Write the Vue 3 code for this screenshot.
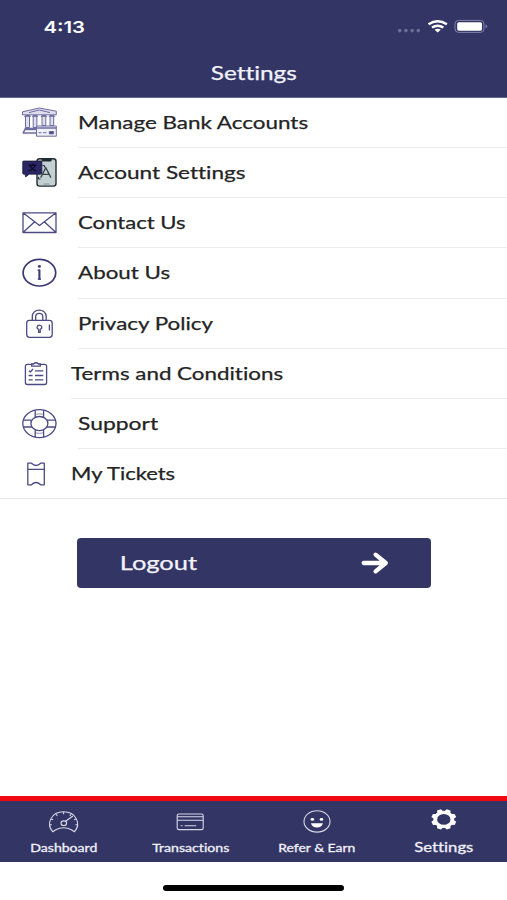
<script setup>
const rows = [
  { id: 'bank', label: 'Manage Bank Accounts', width: 230 },
  { id: 'account', label: 'Account Settings', width: 167.5 },
  { id: 'contact', label: 'Contact Us', width: 107.5 },
  { id: 'about', label: 'About Us', width: 92 },
  { id: 'privacy', label: 'Privacy Policy', width: 135 },
  { id: 'terms', label: 'Terms and Conditions', width: 212, tight: true },
  { id: 'support', label: 'Support', width: 80 },
  { id: 'tickets', label: 'My Tickets', width: 104, tight: true },
]
const tabs = [
  { id: 'dashboard', label: 'Dashboard', width: 67 },
  { id: 'transactions', label: 'Transactions', width: 77 },
  { id: 'refer', label: 'Refer & Earn', width: 77 },
  { id: 'settings', label: 'Settings', width: 59, active: true },
]
const spokes = [0, 45, 90, 135, 180, 225, 270, 315]
</script>

<template>
  <div class="screen">
    <header class="header">
      <div class="status">
        <svg class="clock" width="50" height="20">
          <text x="-0.5" y="15.5" textLength="41.5" lengthAdjust="spacingAndGlyphs">4:13</text>
        </svg>
        <svg class="signals" width="96" height="20" viewBox="394 17 96 20">
          <g fill="#6d6e98">
            <circle cx="399.7" cy="30.6" r="1.8" /><circle cx="405.9" cy="30.6" r="1.8" />
            <circle cx="412.1" cy="30.6" r="1.8" /><circle cx="418.3" cy="30.6" r="1.8" />
          </g>
          <g fill="none" stroke="#fff" stroke-width="2.5">
            <path d="M428.5 24.2Q437.7 18.2 446.9 24.2" />
            <path d="M432 27.5Q437.7 23.8 443.4 27.5" />
          </g>
          <path d="M434.6 29.7Q437.7 27.8 440.8 29.7L437.7 32.5Z" fill="#fff" />
          <rect x="455" y="20.4" width="29" height="12" rx="3.6" fill="none" stroke="#8182a8" />
          <rect x="457.2" y="22.2" width="24.8" height="8.5" rx="1.6" fill="#fff" />
          <path d="M485.6 24.2Q489 26.4 485.6 28.6Z" fill="#8182a8" />
        </svg>
      </div>
      <h1 class="title">
        <svg width="86" height="28">
          <text x="-0.2" y="20.3" textLength="86" lengthAdjust="spacingAndGlyphs">Settings</text>
        </svg>
      </h1>
    </header>

    <ul class="list">
      <li v-for="(row, index) in rows" :key="row.id" class="row" :class="{ tight: row.tight }">
        <svg class="icon" width="60" height="50" viewBox="0 0 60 50">
          <g v-if="row.id === 'bank'" stroke="#6c6ca0" stroke-width="1" fill="#dedeee">
            <path d="M22.5 13.8L39.3 10L56.3 13.2V16.8H22.5Z" />
            <path d="M29 14.6L39.3 12L50 14.6" fill="none" />
            <path d="M25.5 17.5h4v12h-4ZM33.2 17.5h3.7v12h-3.7ZM42 17.5h3.8v10H42ZM50 17.5h3.7v10H50Z" />
            <path d="M24.5 30.5h12M23 34.8L25 31.5h11.5M22.7 35h14" fill="none" stroke-width="1.5" />
            <path d="M24.2 18.3h6.6M32 18.3h6M40.8 18.3h6.3M48.8 18.3h6.4" />
            <path d="M36.5 28h19.8v10.2H36.5Z" fill="#f1f1fa" />
            <path d="M36.5 30h19.8" stroke-width="1.5" />
            <path d="M38.5 34.7h3M43 34.7h3.5" />
            <path d="M49.3 33.5h4.2v2.4h-4.2Z" fill="#454580" />
          </g>
          <g v-else-if="row.id === 'account'">
            <rect x="37" y="10.8" width="19" height="27.3" rx="2.6" fill="#c3d1d3" stroke="#202c32" stroke-width="1.4" />
            <path d="M41.5 11h10.2v1.6q0 .8-1 .8h-8.2q-1 0-1-.8Z" fill="#202c32" />
            <path d="M22.7 14q0-1 1-1h17q1.2 0 1.2 1v11q0 1.2-1.2 1.2H29.2L25.7 29L25 26.2h-1.3q-1 0-1-1.2Z" fill="#2b2764" stroke="#15152f" stroke-width=".7" />
            <path d="M28.5 17.2h8M32.5 15.5v1.7M35 17.2Q33.7 21 28.5 23M30 17.5Q31.5 21 36.3 23" fill="none" stroke="#080922" stroke-width="1.2" />
            <path d="M40.7 29.6L45.8 19.6L50.9 29.6M42.4 26.3h6.8" fill="none" stroke="#35444b" stroke-width="1.3" />
            <path d="M42.5 17.5h2v2M38.5 29v2h2" fill="none" stroke="#202c32" />
            <path d="M43.5 36h6" stroke="#829397" />
          </g>
          <g v-else-if="row.id === 'contact'" class="line">
            <path d="M23 14.8H56V34.5H23ZM23 14.8L39.5 27.5L56 14.8M23 34.5L34.7 23.8M56 34.5L44.3 23.8" />
          </g>
          <g v-else-if="row.id === 'about'">
            <ellipse cx="39.4" cy="24.7" rx="16.3" ry="13.3" fill="none" stroke="#3b3975" stroke-width="1.7" />
            <path d="M37.6 22.2h1.9v8.9M37.8 31.1h3.2" fill="none" stroke="#3b3975" stroke-width="1.2" />
            <path d="M39.4 21.7v9.9" stroke="#3b3975" stroke-width="2" />
            <ellipse cx="39.4" cy="18.4" rx="1.5" ry="1.3" fill="#3b3975" />
          </g>
          <g v-else-if="row.id === 'privacy'" class="line">
            <rect x="26.7" y="21.4" width="25.5" height="17" rx="2.8" />
            <path d="M32.3 21.2V17.5C32.3 9 46.2 9 46.2 17.5V21.2M35.7 21.2V17.5C35.7 13.3 42.8 13.3 42.8 17.5V21.2" />
            <path d="M38.6 30.3Q36.9 29.6 37 28.2Q37.5 26.2 39.4 26.2Q41.4 26.2 41.8 28.2Q41.9 29.6 40.2 30.3V33.4H38.6Z" />
            <path d="M49.4 25.5v6" />
          </g>
          <g v-else-if="row.id === 'terms'" class="line">
            <rect x="25.4" y="15.3" width="21.2" height="20.2" rx="2" />
            <path d="M31.6 17.1V15h2Q36 12.5 38.4 15h2v2.1Z" fill="#fff" />
            <path d="M29 21.7l1.3 1.3L33 20M35 21.8h8.3M28.6 26.5h4M35 26.5h8.3M28.6 30.9h4M35 30.9h8.3" />
          </g>
          <g v-else-if="row.id === 'support'" class="line">
            <ellipse cx="39.4" cy="24.6" rx="16.6" ry="14" />
            <ellipse cx="39.4" cy="24.6" rx="8.5" ry="7.1" />
            <path d="M35.2 18.4V11.3M43.6 18.4V11.3M35.2 30.8V37.9M43.6 30.8V37.9M31.8 21.2H23.5M31.8 28H23.5M47 21.2H55.3M47 28H55.3" />
            <path d="M35.4 15.3Q39.4 14.3 43.4 15.3M35.4 33.9Q39.4 34.9 43.4 33.9" stroke-width=".6" />
          </g>
          <g v-else class="line">
            <path d="M27.8 14.2H31.5Q36 18.8 40.7 14.2H44.3V35.8H40.7Q36 31.2 31.5 35.8H27.8ZM27.8 20.4H44.3" />
          </g>
        </svg>
        <div class="cell">
          <svg :width="row.width + 2" height="34">
            <text x="0.1" :y="index < 4 ? 23.2 : 23.75" :textLength="row.width" lengthAdjust="spacingAndGlyphs">{{ row.label }}</text>
          </svg>
        </div>
      </li>
    </ul>

    <main class="content">
      <button class="logout">
        <svg width="78" height="30">
          <text x="-0.3" y="22" textLength="77.5" lengthAdjust="spacingAndGlyphs">Logout</text>
        </svg>
        <svg width="28" height="24" viewBox="0 0 28 24">
          <path d="M2.7 12H24.5M14.6 3.7L24.8 12L14.6 20.3" fill="none" stroke="#fff" stroke-width="4.3" stroke-linecap="round" stroke-linejoin="round" />
        </svg>
      </button>
    </main>

    <nav class="tabs">
      <div v-for="tab in tabs" :key="tab.id" class="tab" :class="{ active: tab.active }">
        <svg width="36" height="34" viewBox="0 0 36 34">
          <g v-if="tab.id === 'dashboard'" class="tabline" transform="translate(.6 0)">
            <path d="M7.2 30.8C0 23 5.5 10.8 18 10.8C30.5 10.8 36 23 28.8 30.8L26.2 29Q18 24.5 9.8 29Z" />
            <ellipse cx="18.2" cy="22.2" rx="2.8" ry="2.3" />
            <path d="M20 20.3L27.3 15M18 11v2.2M10.5 13.2l1.3 1.8M5.5 18l2 .8M3.9 23.7h2.3M25.5 13.2l-1.3 1.8M30.5 18l-2 .8M32.1 23.7h-2.3" />
          </g>
          <g v-else-if="tab.id === 'transactions'" class="tabline">
            <rect x="5.2" y="13" width="26" height="15.6" rx="1.7" />
            <path d="M5.2 15.8H31.2M5.2 19.3H31.2M8.7 24.7h1.8M12.7 24.7H24.2" />
          </g>
          <g v-else-if="tab.id === 'refer'">
            <ellipse cx="18" cy="20.4" rx="13" ry="10.7" class="tabline" />
            <ellipse cx="13.4" cy="18.4" rx="1.8" ry="1.4" fill="#fff" />
            <ellipse cx="22.5" cy="18.4" rx="1.8" ry="1.4" fill="#fff" />
            <path d="M11.9 22.3H24Q22.8 26.5 18 26.5T11.9 22.3Z" fill="#fff" />
          </g>
          <g v-else transform="translate(17.8 18.4) scale(1.22 1)">
            <circle r="7" fill="none" stroke="#fff" stroke-width="3.1" />
            <path v-for="angle in spokes" :key="angle" d="M-2.7 -7.5L-1.7 -10.3H1.7L2.7 -7.5Z" fill="#fff" :transform="`rotate(${angle + 22.5})`" />
          </g>
        </svg>
        <svg :width="tab.width" height="20">
          <text x="0.3" :y="tab.active ? 16.5 : 16.7" :textLength="tab.width" lengthAdjust="spacingAndGlyphs">{{ tab.label }}</text>
        </svg>
      </div>
    </nav>
    <footer class="home"><span class="indicator"></span></footer>
  </div>
</template>

<style>
body { margin: 0; background: #fff; }
</style>

<style scoped>
.screen {
  width: 507px;
  height: 900px;
  display: flex;
  flex-direction: column;
  overflow: hidden;
  background: #fff;
  font-family: Lato, "Noto Sans", sans-serif;
}
svg { display: block; flex: none; overflow: visible; }
text { font-variant-ligatures: none; }
.header {
  box-sizing: border-box;
  height: 98px;
  flex: none;
  padding-top: 17px;
  background: #333565;
  border-bottom: 1px solid #66678f;
}
.status {
  display: flex;
  justify-content: space-between;
  padding: 0 17px 0 43.5px;
}
.clock text { font: 600 16.5px Inter, sans-serif; fill: #fff; }
.title {
  display: flex;
  justify-content: center;
  margin: 23px 0 0;
}
.title text { font-size: 19px; font-weight: 400; fill: #f2f2fa; stroke: #f2f2fa; stroke-width: .25px; }
.list { list-style: none; margin: 0; padding: 0; }
.row { display: flex; height: 50.14px; }
.cell {
  flex: 1;
  box-sizing: border-box;
  margin-left: 18px;
  padding-top: 7.5px;
  border-bottom: 1px solid #ebebeb;
}
.tight .cell { margin-left: 11px; }
.row:last-child { border-bottom: 1px solid #e6e6e6; height: 49.4px; }
.row:last-child .cell { border-bottom: 0; }
.cell text { font-size: 17.6px; fill: #242424; stroke: #242424; stroke-width: .25px; }
.line { fill: none; stroke: #4b4a83; stroke-width: 1.3px; stroke-linejoin: round; }
.content { flex: 1; padding: 39px 76px 0 77px; }
.logout {
  box-sizing: border-box;
  display: flex;
  align-items: center;
  justify-content: space-between;
  width: 100%;
  height: 49.5px;
  padding: 0 42px 0 43px;
  border: 0;
  border-radius: 4px;
  background: #333565;
  font-family: inherit;
}
.logout text { font-size: 20px; fill: #f4f4fb; stroke: #f4f4fb; stroke-width: .25px; }
.tabs {
  box-sizing: border-box;
  flex: none;
  display: grid;
  grid-template-columns: repeat(4, 1fr);
  height: 66px;
  background: #333565;
  border-top: 5px solid #f00710;
}
.tab { display: flex; flex-direction: column; align-items: center; }
.tab text { font-size: 11.2px; font-weight: 400; fill: #f0f0f8; stroke: #f0f0f8; stroke-width: .3px; }
.tab.active text { font-size: 13.2px; }
.tabline { fill: none; stroke: #d8d8e9; stroke-width: 1.1px; stroke-linejoin: round; }
.home { flex: none; display: flex; justify-content: center; height: 38px; }
.indicator { width: 181px; height: 6px; margin-top: 23px; border-radius: 3px; background: #000; }
</style>
